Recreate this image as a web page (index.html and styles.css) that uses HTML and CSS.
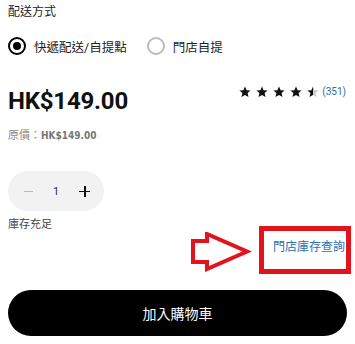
FILE: index.html
```html
<!DOCTYPE html>
<html lang="zh-Hant">
<head>
    <meta charset="UTF-8">
    <meta name="viewport" content="width=device-width, initial-scale=1.0">
    <title>加入購物車</title>
    <link rel="stylesheet" href="styles.css">
</head>
<body>
    <div class="product">
        <div class="label">配送方式</div>
        <div class="delivery">
            <label class="option">
                <span class="radio checked"></span>
                <span>快遞配送/自提點</span>
            </label>
            <label class="option">
                <span class="radio"></span>
                <span>門店自提</span>
            </label>
        </div>

        <div class="price-row">
            <div class="price">HK$149.00</div>
            <div class="rating">
                <svg width="80" height="12" viewBox="0 0 80 12">
                    <defs>
                        <path id="star" d="M6 0.5l1.6 3.7 4 .3-3 2.6.9 3.9L6 8.9 2.5 11l.9-3.9-3-2.6 4-.3z"/>
                        <linearGradient id="half">
                            <stop offset="50%" stop-color="#111"/>
                            <stop offset="50%" stop-color="#ccc"/>
                        </linearGradient>
                    </defs>
                    <use href="#star" x="0" fill="#111"/>
                    <use href="#star" x="17" fill="#111"/>
                    <use href="#star" x="34" fill="#111"/>
                    <use href="#star" x="51" fill="#111"/>
                    <use href="#star" x="68" fill="url(#half)"/>
                </svg>
                <span class="count">(351)</span>
            </div>
        </div>
        <div class="original">原價：<b>HK$149.00</b></div>

        <div class="qty">
            <span class="minus"></span>
            <span class="num">1</span>
            <span class="plus"></span>
        </div>
        <div class="stock">庫存充足</div>

        <div class="store-row">
            <a class="store-link" href="#">門店庫存查詢</a>
            <span class="mark-box"></span>
            <svg class="mark-arrow" width="62" height="40" viewBox="0 0 62 40">
                <polygon points="2,9 16,9 16,2 56,19.5 16,37 16,30 2,30" fill="#fff" stroke="#e3131b" stroke-width="4" stroke-linejoin="miter"/>
            </svg>
        </div>

        <button class="cart-btn" type="button">加入購物車</button>
    </div>
</body>
</html>
```

FILE: styles.css
```css
/* Page */
body {
    margin: 0;
    background: #fff;
    font-family: Roboto, "Noto Sans CJK TC", sans-serif;
    color: #111;
}

.product {
    display: flex;
    flex-direction: column;
    padding: 2px 8px 0;
}

.label {
    font-size: 12px;
    line-height: 20px;
    color: #222;
}

/* Delivery options */
.delivery {
    display: flex;
    gap: 20px;
    margin-top: 12px;
    height: 24px;
    align-items: center;
}

.option {
    display: flex;
    align-items: center;
    gap: 8px;
    font-size: 12.5px;
    color: #222;
}

.radio {
    width: 18px;
    height: 18px;
    border-radius: 50%;
    border: 2px solid #bbb;
    box-sizing: border-box;
    position: relative;
}

.radio.checked {
    border-color: #000;
}

.radio.checked::after {
    content: "";
    position: absolute;
    left: 3px;
    top: 3px;
    width: 8px;
    height: 8px;
    border-radius: 50%;
    background: #000;
}

/* Price */
.price-row {
    display: flex;
    justify-content: space-between;
    align-items: flex-start;
    margin-top: 28px;
}

.price {
    font-size: 24px;
    line-height: 30px;
    font-weight: 700;
    letter-spacing: -0.2px;
}

.rating {
    display: flex;
    align-items: center;
    gap: 3px;
    margin-top: -1px;
    margin-right: 1px;
    line-height: 14px;
}

.count {
    font-size: 10px;
    color: #2a6fb0;
}

.original {
    margin-top: 12px;
    font-size: 11px;
    line-height: 16px;
    color: #888;
}

.original b {
    font-family: "DejaVu Sans Condensed", sans-serif;
    font-size: 10px;
    color: #777;
}

/* Quantity */
.qty {
    margin-top: 27px;
    width: 96px;
    height: 40px;
    border-radius: 20px;
    background: #f2f2f2;
    display: flex;
    align-items: center;
    box-sizing: border-box;
    padding: 0 16px;
}

.minus {
    width: 11px;
    height: 1px;
    background: #bbb;
}

.num {
    font-size: 11px;
    color: #333;
    margin-left: 20px;
}

.plus {
    position: relative;
    width: 11px;
    height: 11px;
    margin-left: 20px;
}

.plus::before,
.plus::after {
    content: "";
    position: absolute;
    background: #111;
}

.plus::before {
    left: 0;
    top: 5px;
    width: 11px;
    height: 1.5px;
}

.plus::after {
    left: 5px;
    top: 0;
    width: 1.5px;
    height: 11px;
}

.stock {
    margin-top: 6px;
    font-size: 11px;
    line-height: 16px;
    color: #444;
}

/* Store stock link with annotation */
.store-row {
    position: relative;
    display: flex;
    justify-content: flex-end;
    margin-top: 6px;
    padding-right: 2px;
}

.store-link {
    font-size: 12px;
    line-height: 16px;
    color: #2a6fb0;
    text-decoration: none;
}

.mark-box {
    position: absolute;
    right: -4px;
    top: -13px;
    width: 92px;
    height: 48px;
    border: 5px solid #e3131b;
    box-sizing: border-box;
}

.mark-arrow {
    position: absolute;
    left: 183px;
    top: -7px;
}

/* Button */
.cart-btn {
    margin-top: 35px;
    height: 46px;
    border: none;
    border-radius: 23px;
    background: #000;
    color: #fff;
    font-family: "Noto Sans CJK TC", sans-serif;
    font-size: 14px;
    cursor: pointer;
}
```
